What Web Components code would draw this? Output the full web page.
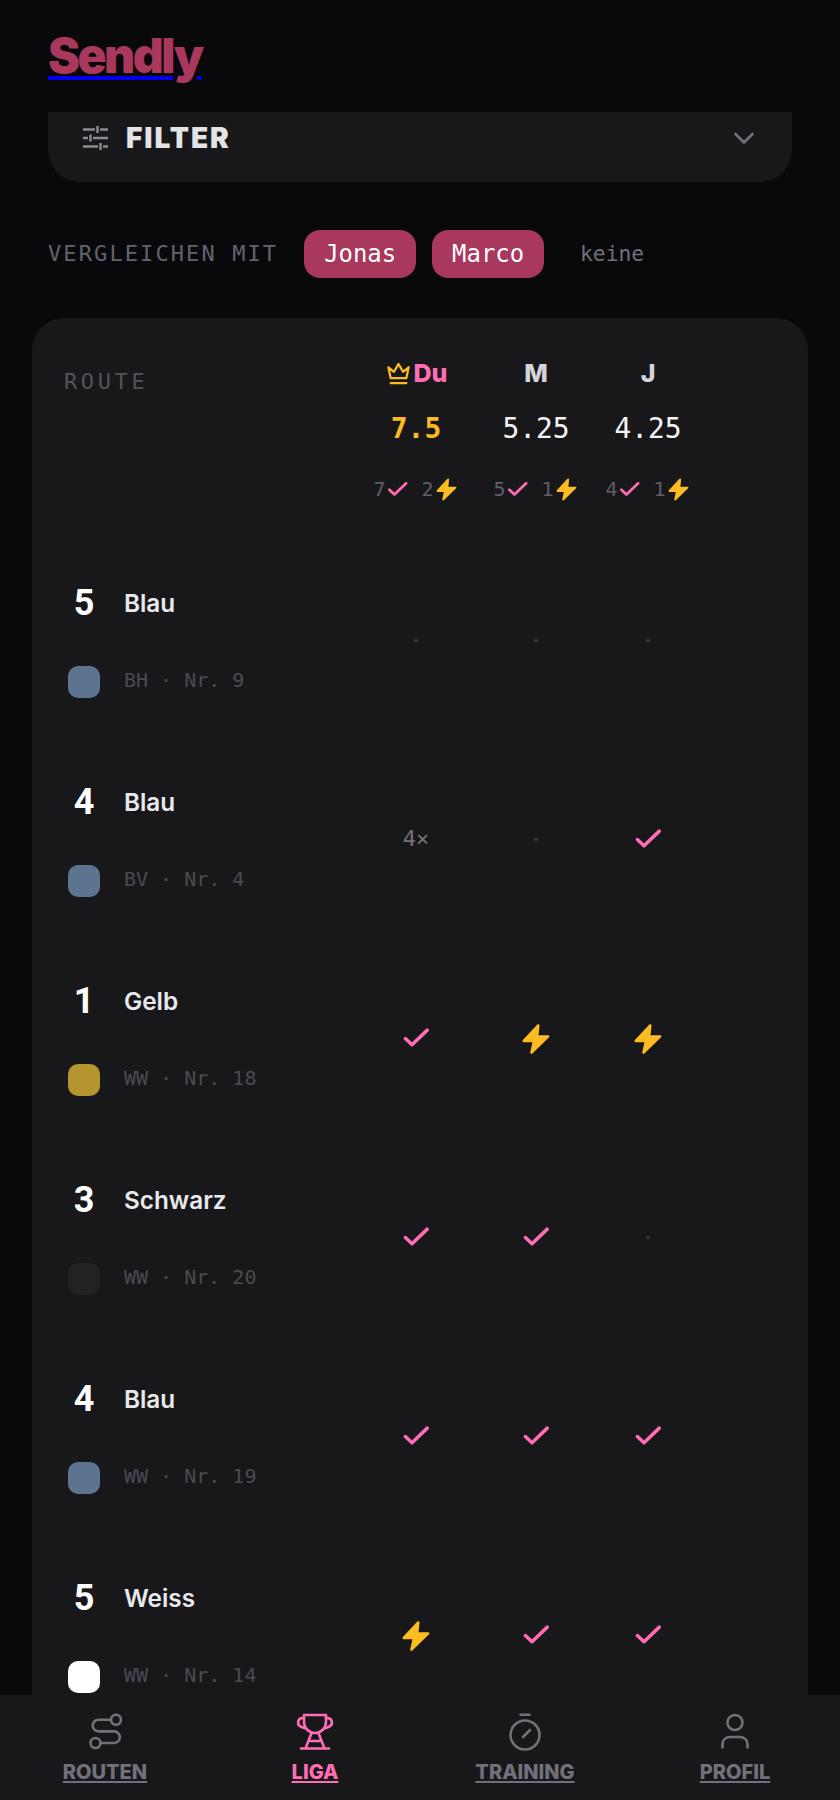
<!doctype html>
<html lang="de"><head><meta charset="utf-8"><title>Sendly</title>
<style>
html,body{margin:0;padding:0;background:#09090b;height:1800px;overflow:hidden}
body{font-family:"Inter",sans-serif;color:#fff}
</style></head>
<body>
<sendly-app></sendly-app>
<script>
const MONO='"DejaVu Sans Mono","Liberation Mono",monospace';
const CHECK=(s,up=0)=>`<svg width="${s}" height="${s}" viewBox="0 0 24 24" fill="none" stroke="#ff6eb4" stroke-width="2.8" stroke-linecap="round" stroke-linejoin="round" style="margin-top:${-up}px"><path d="M3.5 13.2l5.3 5L21 6.5"/></svg>`;
const BOLT=(s)=>`<svg width="${s}" height="${s}" viewBox="0 0 24 24"><path fill="#fdbc22" stroke="#fdbc22" stroke-width="1.8" stroke-linejoin="round" d="M13.6 2.400 3.400 13.400h7.200l-1.800 8.200 11.800-11.400h-7.800z"/></svg>`;

class SendlyHeader extends HTMLElement{constructor(){super();this.attachShadow({mode:'open'}).innerHTML=`<style>
:host{display:block;height:112px;box-sizing:border-box;padding:27px 48px 0}
a{font:900 48px/1.2 "Inter",sans-serif;letter-spacing:-.052em;color:#0000ee;text-decoration:underline;text-decoration-thickness:4px;text-underline-offset:3px}
span{color:#a8385c}
</style><a href="#"><span>Sendly</span></a>`}}
customElements.define('sendly-header',SendlyHeader);

class FilterPanel extends HTMLElement{constructor(){super();this.attachShadow({mode:'open'}).innerHTML=`<style>
:host{display:flex;align-items:flex-start;justify-content:space-between;margin:0 48px;height:70px;box-sizing:border-box;padding:10px 36px 0 34px;background:#18181b;border-radius:0 0 32px 32px}
.l{display:flex;align-items:center;gap:16px}
b{font:900 28px/32px "Inter",sans-serif;letter-spacing:.07em;color:#e4e4e7}
svg{display:block}
</style><div class="l"
><svg width="28" height="28" viewBox="0 0 28 28" fill="none" stroke="#8b8b93" stroke-width="2.400"><path d="M1 5.500h12M18 5.500h8M15.500 2v7M1 14h5M11 14h15M8.500 10.500v7M1 22.500h15M21 22.500h5M18.500 19v7"/></svg><b>FILTER</b></div>
<svg style="margin-top:4px" width="24" height="24" viewBox="0 0 24 24" fill="none" stroke="#71717a" stroke-width="2.600" stroke-linecap="round" stroke-linejoin="round"><path d="M3.500 8l8.500 8.500L20.500 8"/></svg>`}}
customElements.define('filter-panel',FilterPanel);

class ComparePill extends HTMLElement{constructor(){super();this.attachShadow({mode:'open'}).innerHTML=`<style>
:host{display:block;font:500 23.9px/48px ${MONO};height:48px;padding:0 20px;border-radius:16px;background:#a8385c;color:#fff}
:host([off]){background:none;color:#71717a;font-size:21.3px}
</style><slot></slot>`}}
customElements.define('compare-pill',ComparePill);

class CompareRow extends HTMLElement{constructor(){super();this.attachShadow({mode:'open'}).innerHTML=`<style>
:host{display:flex;align-items:center;gap:16px;margin:48px 48px 0;height:48px}
.t{font:400 22px/1 ${MONO};letter-spacing:2.1px;color:#63636d;margin-right:10px;white-space:nowrap}
</style><span class="t">VERGLEICHEN MIT</span><slot></slot>`}}
customElements.define('compare-row',CompareRow);

const GRID='grid-template-columns:288px 128px 112px 112px';
class PlayerHead extends HTMLElement{constructor(){super();
const n=this.getAttribute('name'),s=this.getAttribute('score'),c=this.getAttribute('c'),b=this.getAttribute('b'),me=this.hasAttribute('me');
this.attachShadow({mode:'open'}).innerHTML=`<style>
:host{display:flex;flex-direction:column;align-items:center}
.n{display:flex;align-items:center;gap:2px;height:32px;font:800 25px/32px "Inter",sans-serif;color:${me?'#ff6eb4':'#d4d4d8'}}
.s{margin-top:24px;height:32px;font:${me?700:400} 27.9px/32px ${MONO};color:${me?'#fdb922':'#f4f4f5'}}
.c{margin-top:30px;height:28px;display:flex;align-items:center;gap:13px;font:400 20px/28px ${MONO};color:#5e5e68}
.c span{display:flex;align-items:center}
svg{display:block}
</style>
<div class="n">${me?`<svg width="27" height="27" viewBox="0 0 24 24" fill="none" stroke="#fdbc22" stroke-width="2" stroke-linecap="round" stroke-linejoin="round"><path d="M12 3.500 16 10.500l5-4-2 9.500H5L3 6.500 8 10.500z"/><path d="M5 20.500h14"/></svg>`:''}${n}</div>
<div class="s">${s}</div>
<div class="c"><span>${c}${CHECK(23,2)}</span><span>${b}${BOLT(25)}</span></div>`}}
customElements.define('player-head',PlayerHead);

class RouteRow extends HTMLElement{constructor(){super();
const g=this.getAttribute('grade'),n=this.getAttribute('name'),m=this.getAttribute('meta'),col=this.getAttribute('color');
this.attachShadow({mode:'open'}).innerHTML=`<style>
:host{display:grid;${GRID};height:199px;align-items:center}
.r{display:grid;grid-template-columns:32px 1fr;column-gap:24px;row-gap:37px;padding:0 0 3px 4px;align-items:center}
.g{font:700 36px/44px "Roboto",sans-serif;text-align:center;color:#fff;height:48px}
.n{font:600 24.3px/44px "Inter",sans-serif;color:#e9e9ec;height:48px;white-space:nowrap}
.sw{width:32px;height:32px;border-radius:10px;background:${col}}
.m{font:400 20px/29px ${MONO};color:#4a4a52;height:32px}
::slotted(*){justify-self:center}
</style><div class="r"><div class="g">${g}</div><div class="n">${n}</div><div class="sw"></div><div class="m">${m}</div></div><slot></slot>`}}
customElements.define('route-row',RouteRow);

class RMark extends HTMLElement{constructor(){super();
const k=this.getAttribute('k');
let h='';
if(k==='c')h=CHECK(30,4);else if(k==='b')h=BOLT(34);else if(k==='d')h='<i></i>';else h='<u>'+k+'</u>';
this.attachShadow({mode:'open'}).innerHTML=`<style>
:host{display:flex;align-items:center;justify-content:center;height:32px}
i{display:block;width:4px;height:3px;border-radius:1px;background:#34343a}
u{text-decoration:none;font:400 22px/32px ${MONO};color:#71717a;margin-top:-2px}
svg{display:block;flex:none}
</style>${h}`}}
customElements.define('r-mark',RMark);

class LeagueTable extends HTMLElement{constructor(){super();this.attachShadow({mode:'open'}).innerHTML=`<style>
:host{display:block;margin:40px 32px 0 32px;background:#18181b;border-radius:32px;padding:32px 0 0 32px}
.h{display:grid;${GRID};height:191px;align-items:start;padding-top:7px;box-sizing:border-box}
.t{font:400 22px/1 ${MONO};letter-spacing:3.6px;color:#52525b;padding-top:14px}
</style>
<div class="h"><div class="t">ROUTE</div><slot name="head"></slot></div><slot></slot>`}}
customElements.define('league-table',LeagueTable);

class NavItem extends HTMLElement{constructor(){super();this.attachShadow({mode:'open'}).innerHTML=`<style>
:host{display:flex;flex-direction:column;align-items:center;gap:6px;color:#71717a}
:host([active]){color:#ff6eb4}
span{font:800 20px/28px "Inter",sans-serif;text-decoration:underline;text-decoration-thickness:2px;text-underline-offset:2px}
</style><slot name="i"></slot><span><slot></slot></span>`}}
customElements.define('nav-item',NavItem);

class BottomNav extends HTMLElement{constructor(){super();this.attachShadow({mode:'open'}).innerHTML=`<style>
:host{position:fixed;left:0;right:0;bottom:0;height:105px;box-sizing:border-box;padding-top:17px;background:#18181b;display:grid;grid-template-columns:repeat(4,1fr)}
</style><slot></slot>`}}
customElements.define('bottom-nav',BottomNav);

class SendlyApp extends HTMLElement{constructor(){super();
const B='#5d7490';
const rows=[['5','Blau','BH · Nr. 9',B,'d','d','d'],['4','Blau','BV · Nr. 4',B,'4×','d','c'],['1','Gelb','WW · Nr. 18','#b5952f','c','b','b'],['3','Schwarz','WW · Nr. 20','#222224','c','c','d'],['4','Blau','WW · Nr. 19',B,'c','c','c'],['5','Weiss','WW · Nr. 14','#ffffff','b','c','c']];
const ic=(d)=>`<svg slot="i" width="40" height="40" viewBox="0 0 40 40" fill="none" stroke="currentColor" stroke-width="2.600" stroke-linecap="round" stroke-linejoin="round" style="display:block">${d}</svg>`;
this.attachShadow({mode:'open'}).innerHTML=`<style>:host{display:block;height:1800px;overflow:hidden}</style>
<sendly-header></sendly-header><filter-panel></filter-panel>
<compare-row><compare-pill>Jonas</compare-pill><compare-pill>Marco</compare-pill><compare-pill off>keine</compare-pill></compare-row>
<league-table>
<player-head slot="head" me name="Du" score="7.5" c="7" b="2"></player-head>
<player-head slot="head" name="M" score="5.25" c="5" b="1"></player-head>
<player-head slot="head" name="J" score="4.25" c="4" b="1"></player-head>
${rows.map(r=>`<route-row grade="${r[0]}" name="${r[1]}" meta="${r[2]}" color="${r[3]}"><r-mark k="${r[4]}"></r-mark><r-mark k="${r[5]}"></r-mark><r-mark k="${r[6]}"></r-mark></route-row>`).join('')}
</league-table>
<bottom-nav>
<nav-item>${ic('<circle cx="31" cy="7.800" r="5"/><circle cx="10.500" cy="31" r="5"/><path d="M26 7.800H13.500a5.800 5.800 0 0 0 0 11.600H29a5.800 5.800 0 0 1 0 11.600H15.500"/>')}ROUTEN</nav-item>
<nav-item active>${ic('<path d="M9 3h22v7a11 11 0 0 1-22 0z"/><path d="M9 6H7.500a4.500 4.500 0 0 0-1.500 8.700l4 1.500M31 6h1.500a4.500 4.500 0 0 1 1.500 8.700l-4 1.500"/><path d="M16.500 21l-6 15.500M23.500 21l6 15.500M14.500 29h11M6 36.500h28"/>')}LIGA</nav-item>
<nav-item>${ic('<circle cx="20" cy="23" r="14.500"/><path d="M15.500 2.800h9M18 25l7-7"/>')}TRAINING</nav-item>
<nav-item>${ic('<circle cx="20" cy="10.500" r="7.500"/><path d="M7.500 35.500v-3c0-5 3.500-7.500 8-7.500h9c4.500 0 8 2.500 8 7.500v3"/>')}PROFIL</nav-item>
</bottom-nav>`}}
customElements.define('sendly-app',SendlyApp);
</script>
</body></html>
